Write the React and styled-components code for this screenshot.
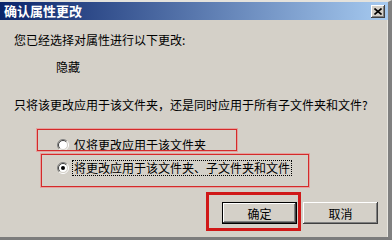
import styled, { createGlobalStyle } from "styled-components"

const GlobalStyle = createGlobalStyle`
  html, body { margin: 0; padding: 0; background: #d4d0c8; }
  body { font-family: "Noto Sans CJK SC", "Liberation Sans", sans-serif; }
`

const Radio = ({ checked }) => (
  <svg width="12" height="12" viewBox="0 0 12 12">
    <circle cx="6" cy="6" r="4.5" fill="#fff" />
    <path d="M2.1 9.9 A5.5 5.5 0 0 1 9.9 2.1" fill="none" stroke="#808080" />
    <path d="M9.9 2.1 A5.5 5.5 0 0 1 2.1 9.9" fill="none" stroke="#fff" />
    <path d="M2.8 9.2 A4.5 4.5 0 0 1 9.2 2.8" fill="none" stroke="#404040" />
    <path d="M9.2 2.8 A4.5 4.5 0 0 1 2.8 9.2" fill="none" stroke="#d4d0c8" />
    {checked && <circle cx="6" cy="6" r="2" fill="#000" />}
  </svg>
)

export default function App() {
  return (
    <>
      <GlobalStyle />
      <Window>
        <TitleBar>
          <Title>确认属性更改</Title>
          <CloseButton>
            <svg width="8" height="7" viewBox="0 0 8 7">
              <path d="M0.5 0.5 L7.5 6.5 M7.5 0.5 L0.5 6.5" stroke="#000" strokeWidth="1.6" />
            </svg>
          </CloseButton>
        </TitleBar>
        <Body>
          <Line>您已经选择对属性进行以下更改:</Line>
          <Line indent={42} top={13}>隐藏</Line>
          <Line top={24}>只将该更改应用于该文件夹，还是同时应用于所有子文件夹和文件?</Line>
          <Options>
            <OptionRow>
              <Radio />
              <Label>仅将更改应用于该文件夹</Label>
            </OptionRow>
            <OptionRow>
              <Radio checked />
              <Label focused>将更改应用于该文件夹、子文件夹和文件</Label>
            </OptionRow>
            <Mark style={{ left: 23, top: -8, width: 200, height: 22 }} />
            <Mark style={{ left: 27, top: 17, width: 268, height: 33 }} />
          </Options>
          <ButtonRow>
            <ButtonWrap>
              <Button primary>确定</Button>
              <OkMark />
            </ButtonWrap>
            <Button>取消</Button>
          </ButtonRow>
        </Body>
      </Window>
    </>
  )
}

const Window = styled.div`
  width: 392px;
  height: 240px;
  box-sizing: border-box;
  background: #d4d0c8;
  border-top: 2px solid #e4e2dc;
  border-right: 4px solid #808080;
  border-bottom: 3px solid #7c7c7c;
  box-shadow: inset -1px 0 #e8e6e0;
  display: flex;
  flex-direction: column;
  overflow: hidden;
`

const TitleBar = styled.div`
  height: 18px;
  display: flex;
  align-items: center;
  justify-content: space-between;
  padding: 0 3px 0 4px;
  background: linear-gradient(to right, #0a246a, #a6caf0);
`

const Title = styled.div`
  color: #fff;
  font-size: 13px;
  font-weight: bold;
  line-height: 18px;
`

const CloseButton = styled.div`
  width: 14px;
  height: 13px;
  background: #d4d0c8;
  display: flex;
  align-items: center;
  justify-content: center;
  box-shadow: inset -1px -1px #404040, inset 1px 1px #fff, inset -2px -2px #808080;
`

const Body = styled.div`
  flex: 1;
  padding: 13px 10px 0 14px;
  color: #000;
  font-size: 12px;
`

const Line = styled.div`
  height: 14px;
  line-height: 14px;
  white-space: nowrap;
  margin-top: ${p => p.top || 0}px;
  padding-left: ${p => p.indent || 0}px;
`

const Options = styled.div`
  position: relative;
  margin-top: 25px;
  padding-left: 43px;
  display: flex;
  flex-direction: column;
  gap: 7px;
`

const OptionRow = styled.div`
  height: 16px;
  display: flex;
  align-items: center;
`

const Label = styled.span`
  margin-left: 3px;
  padding: 0 1px;
  line-height: 14px;
  white-space: nowrap;
  border: 1px dotted ${p => (p.focused ? "#000" : "transparent")};
`

const Mark = styled.div`
  position: absolute;
  box-sizing: border-box;
  border: 1px solid #d42a2a;
  box-shadow: 0 0 0 1px rgba(240, 130, 130, 0.6);
  pointer-events: none;
`

const ButtonRow = styled.div`
  margin-top: 26px;
  display: flex;
  justify-content: flex-end;
  gap: 6px;
`

const ButtonWrap = styled.div`
  position: relative;
`

const Button = styled.div`
  width: 75px;
  height: 22px;
  box-sizing: border-box;
  display: flex;
  align-items: center;
  justify-content: center;
  font-size: 12px;
  background: #d4d0c8;
  border: ${p => (p.primary ? "1px solid #000" : "none")};
  box-shadow: inset -1px -1px #404040, inset 1px 1px #fff, inset -2px -2px #808080;
`

const OkMark = styled.div`
  position: absolute;
  left: -16px;
  top: -10px;
  width: 95px;
  height: 39px;
  box-sizing: border-box;
  border: 3px solid #d01818;
  pointer-events: none;
`
